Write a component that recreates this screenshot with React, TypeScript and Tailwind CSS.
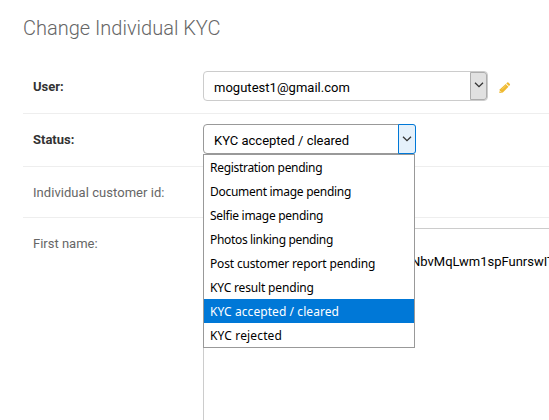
import type { ReactNode } from "react";

const statuses = [
  { label: "Registration pending", width: "tracking-[-0.3px]" },
  { label: "Document image pending", width: "tracking-[-0.28px]" },
  { label: "Selfie image pending", width: "tracking-[-0.28px]" },
  { label: "Photos linking pending", width: "tracking-[-0.33px]" },
  { label: "Post customer report pending", width: "tracking-[-0.16px]" },
  { label: "KYC result pending", width: "tracking-[-0.16px]" },
  { label: "KYC accepted / cleared", width: "tracking-[0.07px]" },
  { label: "KYC rejected", width: "tracking-[0.15px]" },
];

function Chevron() {
  return (
    <svg className="mb-px" width="10" height="6" viewBox="0 0 10 6" fill="none" stroke="#333" strokeWidth="1.3">
      <path d="M1 0.8 L5 4.6 L9 0.8" />
    </svg>
  );
}

function Pencil() {
  return (
    <svg width="11.5" height="11.5" viewBox="0 0 12 12">
      <path d="M0.3 11.7 L1 7.6 L7 2.1 L9.9 5 L4 10.9 Z" fill="#efb92f" />
      <path d="M7.6 1.5 L8.6 0.6 Q9.2 0.1 9.8 0.6 L11.3 2.1 Q11.8 2.7 11.3 3.3 L10.4 4.3 Z" fill="#efb92f" />
      <path d="M1.5 9.4 L2.7 10.6 L1.8 10.8 L1.3 10.3 Z" fill="#fff" />
      <path d="M3 7.8 L7.2 3.6" stroke="#f8dc8d" strokeWidth="0.7" />
    </svg>
  );
}

function Row({ label, bold, className, labelClass = "", children }: { label: string; bold?: boolean; className: string; labelClass?: string; children?: ReactNode }) {
  return (
    <div className={`flex border-[#eee] pl-[10px] ${className}`}>
      <div className={`w-[170px] shrink-0 text-[13px] leading-[15px] ${labelClass} ${bold ? "font-bold text-[#333]" : "text-[#666]"}`}>
        {label}
      </div>
      {children}
    </div>
  );
}

export default function App() {
  return (
    <main className="h-[420px] w-[549px] overflow-hidden bg-white pl-[23px] pt-4 font-['Roboto',sans-serif]">
      <h1 className="h-[44px] text-[20px] font-light leading-[24px] text-[#666]">Change Individual KYC</h1>
      <Row label="User:" bold className="h-[54px] items-center border-b">
        <div className="-mt-0.5 flex h-[30px] w-[285px] items-stretch rounded border border-[#ccc]">
          <span className="flex-1 pl-[10px] pt-2 text-[13px] leading-4 tracking-[0.02px] text-black">mogutest1@gmail.com</span>
          <span className="flex w-[17px] items-center justify-center rounded-r-[3px] border border-[#adadad] bg-[#e1e1e1]">
            <Chevron />
          </span>
        </div>
        <span className="ml-[11px] mt-0.5"><Pencil /></span>
      </Row>
      <Row label="Status:" bold className="h-[53px] items-start border-b pt-[10px]" labelClass="mt-2">
        <div className="relative flex h-[30px] w-[213px] items-stretch rounded border border-[#999]">
          <span className="flex-1 pl-[10px] pt-2 text-[13px] leading-4 text-black">KYC accepted / cleared</span>
          <span className="-my-px -mr-px flex w-[18px] items-center justify-center rounded-r-[3px] border border-[#0078d7] bg-[#e5f1fb]">
            <Chevron />
          </span>
          <ul className="absolute -left-px top-[29px] z-10 w-[212px] border border-[#999] bg-white font-['Noto_Sans',sans-serif] text-[12px] leading-[26px] text-black">
            {statuses.map(({ label, width }) => (
              <li
                key={label}
                className={`h-[24px] whitespace-nowrap pl-[6px] ${width} ${label === "KYC accepted / cleared" ? "bg-[#0078d7] text-white" : ""}`}
              >
                {label}
              </li>
            ))}
          </ul>
        </div>
      </Row>
      <Row label="Individual customer id:" className="h-[51px] items-center border-b" labelClass="tracking-[0.05px]" />
      <Row label="First name:" className="items-start pt-[10px]" labelClass="mt-2">
        <div className="h-[220px] w-[500px] shrink-0 rounded border border-[#ccc] pl-[207px] pt-[25px] text-[13px] leading-4 text-black">
          NbvMqLwm1spFunrswIT
        </div>
      </Row>
    </main>
  );
}
